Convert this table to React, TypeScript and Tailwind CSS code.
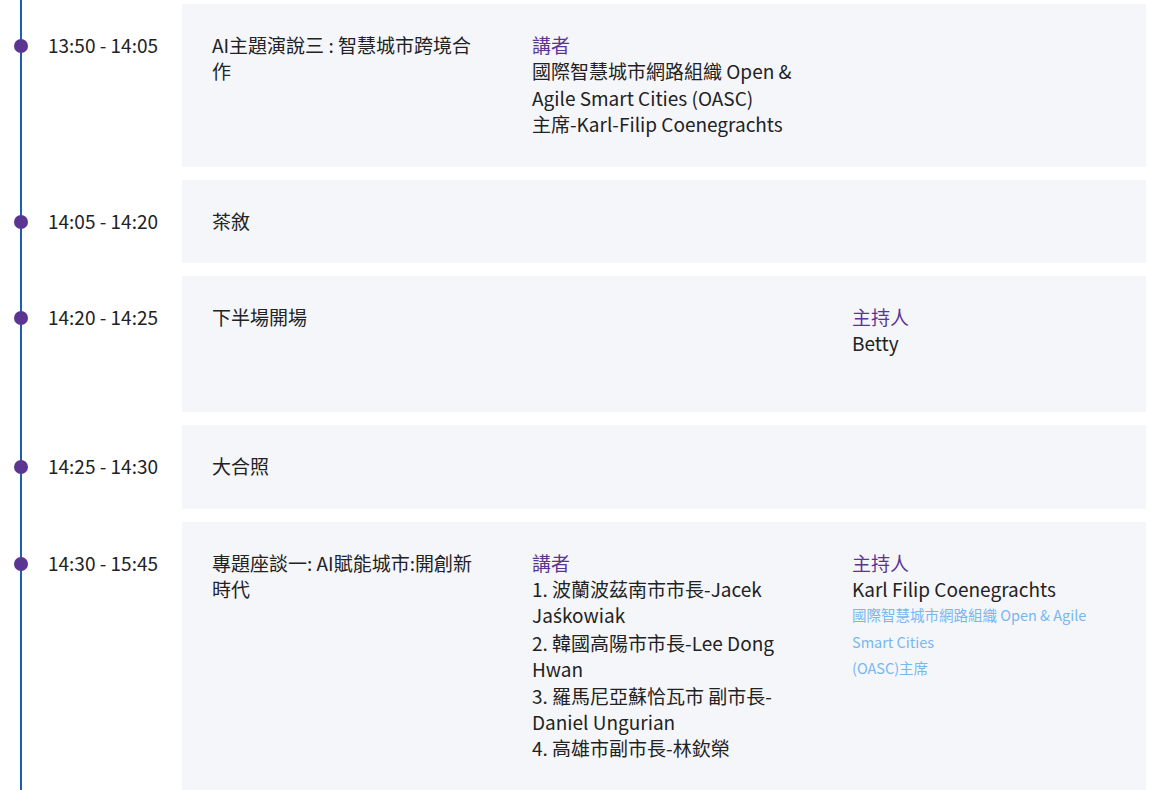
import React from 'react';

type Session = {
  time: string;
  title: string;
  speakers?: React.ReactNode[];
  host?: { name: string; desc?: string[] };
  extraLine?: boolean;
};

const sessions: Session[] = [
  {
    time: '13:50 - 14:05',
    title: 'AI主題演說三 : 智慧城市跨境合作',
    speakers: ['國際智慧城市網路組織 Open & Agile Smart Cities (OASC)', '主席-Karl-Filip Coenegrachts'],
  },
  { time: '14:05 - 14:20', title: '茶敘' },
  { time: '14:20 - 14:25', title: '下半場開場', host: { name: 'Betty' }, extraLine: true },
  { time: '14:25 - 14:30', title: '大合照' },
  {
    time: '14:30 - 15:45',
    title: '專題座談一: AI賦能城市:開創新時代',
    speakers: [
      <>
        1. 波蘭波茲南市市長-Jacek Ja<span className="font-['Noto_Sans']">{'\u015B'}</span>kowiak
      </>,
      '2. 韓國高陽市市長-Lee Dong Hwan',
      '3. 羅馬尼亞蘇恰瓦市 副市長-Daniel Ungurian',
      '4. 高雄市副市長-林欽榮',
    ],
    host: {
      name: 'Karl Filip Coenegrachts',
      desc: ['國際智慧城市網路組織 Open & Agile Smart Cities', '(OASC)主席'],
    },
  },
];

function Row({ s }: { s: Session }) {
  return (
    <div className="flex pb-[13px]">
      <div className="w-[160px] shrink-0 pt-[28px]">
        <div className="relative pl-[26px] leading-[26.4px] text-[19px] text-[#222]">
          <span className="absolute left-[-8px] top-[7px] w-[14px] h-[14px] rounded-full bg-[#5c3593]" />
          {s.time}
        </div>
      </div>
      <div className="flex-1 bg-[#f5f6fa] px-[30px] pt-[28px] pb-[29px] grid grid-cols-[263px_263px_263px] gap-x-[57px] text-[19px] leading-[26.4px] text-[#222]">
        <div>{s.title}</div>
        <div>
          {s.speakers && (
            <>
              <div className="text-[#5c3593]">講者</div>
              {s.speakers.map((sp, i) => (
                <div key={i}>{sp}</div>
              ))}
            </>
          )}
        </div>
        <div>
          {s.host && (
            <>
              <div className="text-[#5c3593]">主持人</div>
              <div>{s.host.name}</div>
              {s.host.desc && (
                <div className="text-[14.5px] leading-[26.4px] text-[#78b6f2]">
                  {s.host.desc.map((d) => (
                    <div key={d}>{d}</div>
                  ))}
                </div>
              )}
              {s.extraLine && <div className="h-[26.4px]" />}
            </>
          )}
        </div>
      </div>
    </div>
  );
}

export default function App() {
  return (
    <div
      className="w-[1149px] h-[790px] overflow-hidden bg-white"
      style={{ fontFamily: '"Noto Sans CJK TC", "Noto Sans", sans-serif' }}
    >
      <div className="ml-[20px] mr-[3px] pt-[4px] border-l-2 border-[#1a5fb0]">
        {sessions.map((s) => (
          <Row key={s.time} s={s} />
        ))}
      </div>
    </div>
  );
}
